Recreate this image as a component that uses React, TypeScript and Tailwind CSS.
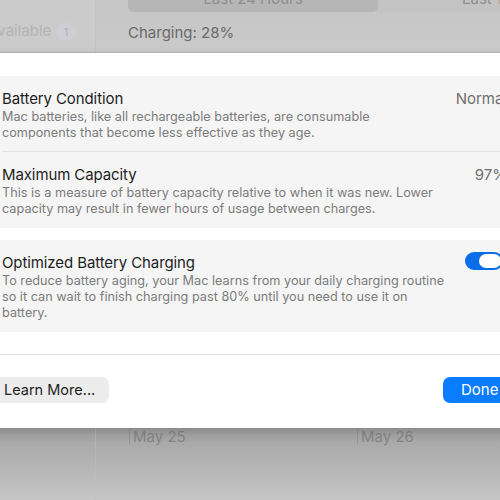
import React from "react";

const font = { fontFamily: "Inter, 'Noto Sans', 'Liberation Sans', sans-serif" };

function Row({ title, lines, value, last, pb = "pb-[10px]" }: { title: string; lines: string[]; value?: React.ReactNode; last?: boolean; pb?: string }) {
  return (
    <div className={`flex pt-[13px] ${pb} ${last ? "" : "border-b border-[#e3e3e3]"}`}>
      <div className="w-[453px] shrink-0">
        <div className="text-[15px] leading-[20px] text-[#1e1e1e] tracking-[-0.1px]">{title}</div>
        <div className="text-[12.7px] leading-[16px] text-[#7c7c7c] whitespace-nowrap">
          {lines.map((l, i) => (
            <div key={i}>{l}</div>
          ))}
        </div>
      </div>
      <div className="flex-1 flex justify-end">{value}</div>
    </div>
  );
}

export default function App() {
  return (
    <div className="w-[500px] h-[500px] overflow-hidden bg-[#c8c8c8] flex flex-col" style={font}>
      {/* top backdrop */}
      <div className="h-[53px] flex shrink-0 border-b border-[#b9b9b9]">
        <div className="w-[96px] shrink-0 bg-[#cbcbcb] border-r border-[#c3c3c3] flex items-end pb-[12px]">
          <span className="-ml-[12px] text-[15px] leading-[18px] text-[#b3b3b3]">Available</span>
          <span className="ml-[5px] mb-[-1px] w-[19px] h-[18px] rounded-full bg-[#cfcfd3] text-[11px] leading-[18px] text-[#b1b1b1] text-center">1</span>
        </div>
        <div className="flex-1 flex flex-col pl-[32px] bg-gradient-to-b from-[#c6c6c6] to-[#c9c9c9]">
          <div className="-mt-[12px] h-[24px] flex rounded-[6px] bg-[#c3c3c3]">
            <div className="w-[250px] rounded-[6px] bg-[#b6b6b6] text-center text-[15px] leading-[22px] text-[#8e8e8e]">Last 24 Hours</div>
            <div className="pl-[84px] text-[15px] leading-[22px] text-[#8e8e8e] whitespace-nowrap">Last 10 Days</div>
          </div>
          <div className="mt-[12px] text-[15px] leading-[18px] text-[#6a6a6a]">Charging: 28%</div>
        </div>
      </div>

      {/* sheet */}
      <div className="h-[375px] shrink-0 -ml-[20px] w-[560px] bg-white flex flex-col pt-[23px] shadow-[0_4px_10px_rgba(0,0,0,0.18)] relative z-10">
        <div className="ml-[10px] w-[529px] rounded-[8px] bg-[#f5f5f5] pl-[12px] pr-[12px]">
          <Row
            title="Battery Condition"
            lines={["Mac batteries, like all rechargeable batteries, are consumable", "components that become less effective as they age."]}
            value={<span className="text-[15px] leading-[20px] text-[#6f6f6f]">Normal</span>}
          />
          <Row
            title="Maximum Capacity"
            lines={["This is a measure of battery capacity relative to when it was new. Lower", "capacity may result in fewer hours of usage between charges."]}
            value={<span className="text-[15px] leading-[20px] text-[#6f6f6f]">97%</span>}
            last
            pb="pb-[11px]"
          />
        </div>
        <div className="mt-[12px] ml-[10px] w-[529px] rounded-[8px] bg-[#f5f5f5] pl-[12px] pr-[12px]">
          <Row
            title="Optimized Battery Charging"
            lines={[
              "To reduce battery aging, your Mac learns from your daily charging routine",
              "so it can wait to finish charging past 80% until you need to use it on",
              "battery.",
            ]}
            value={
              <div className="ml-[10px] mr-auto -mt-[1px] w-[38px] h-[18px] rounded-full bg-[#0a6ee9] flex items-center justify-end pr-[2px]">
                <div className="w-[22px] h-[14px] rounded-full bg-white" />
              </div>
            }
            last
            pb="pb-[11px]"
          />
        </div>
        <div className="mt-[22px] h-px bg-[#e2e2e2]" />
        <div className="mt-[22px] ml-[10px] w-[525px] flex justify-between">
          <div className="h-[26px] rounded-[7px] bg-[#ececec] pl-[14px] pr-[14px] text-[14.5px] leading-[26px] text-[#1e1e1e]">Learn More...</div>
          <div className="h-[26px] w-[72px] rounded-[7px] bg-[#0a7cff] pl-[18px] text-[15px] leading-[26px] text-white">Done</div>
        </div>
      </div>

      {/* bottom backdrop */}
      <div className="flex-1 flex bg-gradient-to-b from-[#a2a2a2] to-[#c6c6c6]">
        <div className="w-[96px] shrink-0 border-r border-[#c0c0c0]/50" />
        <div className="w-[33px]" />
        <div className="w-[228px] flex">
          <div className="w-px h-[17px] bg-[#979797]" />
          <span className="ml-[3px] text-[15px] leading-[18px] text-[#868686]">May 25</span>
        </div>
        <div className="flex">
          <div className="w-px h-[17px] bg-[#979797]" />
          <span className="ml-[3px] text-[15px] leading-[18px] text-[#868686]">May 26</span>
        </div>
      </div>
    </div>
  );
}
